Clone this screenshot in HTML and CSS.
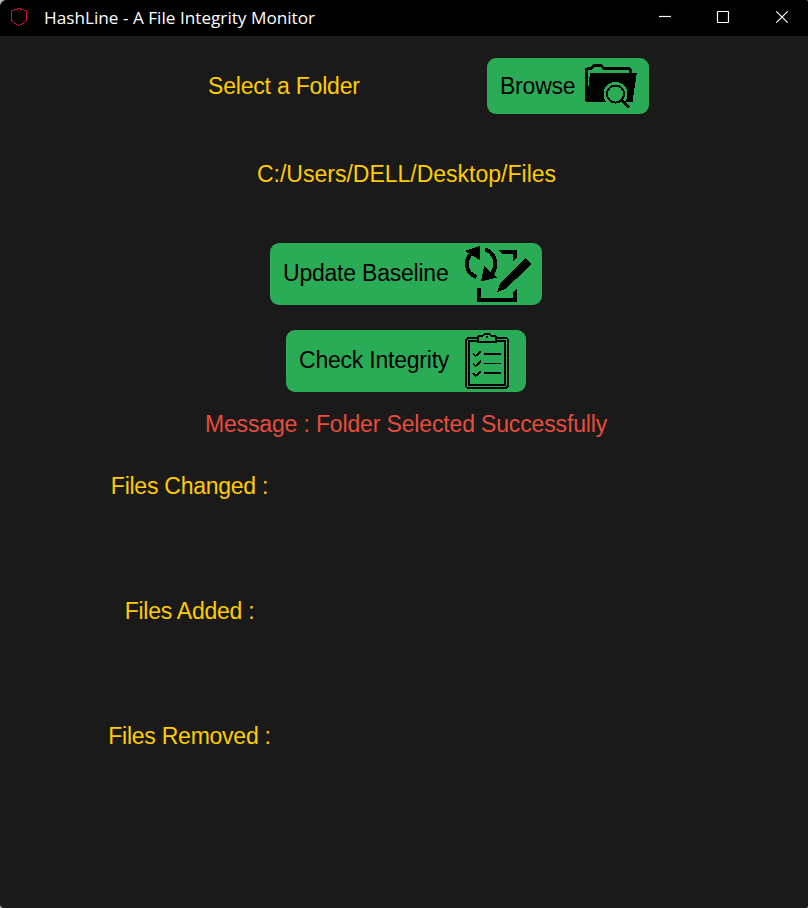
FILE: index.html
```html
<!DOCTYPE html>
<html lang="en">
<head>
<meta charset="utf-8">
<title>HashLine - A File Integrity Monitor</title>
<link rel="stylesheet" href="styles.css">
</head>
<body>
<div class="window">
  <header class="titlebar">
    <svg class="shield" viewBox="0 0 18 20" width="18" height="20"><path d="M9 1.500 6 2.500 1.500 3.500V13L4 16 9 18.500 14 16 16.500 13V3.500L12 2.500Z"/></svg>
    <h1 class="title">HashLine - A File Integrity Monitor</h1>
    <div class="controls">
      <svg viewBox="0 0 58 36" width="58" height="36"><path d="M23 16.500H35"/></svg>
      <svg viewBox="0 0 58 36" width="58" height="36"><rect x="23.500" y="11.500" width="11" height="11" rx=".7"/></svg>
      <svg viewBox="0 0 58 36" width="58" height="36"><path d="M24.300 11.300 35.700 22.700M35.700 11.300 24.300 22.700"/></svg>
    </div>
  </header>
  <main class="content">
    <div class="picker">
      <span class="label prompt">Select a Folder</span>
      <button class="button browse">
        <span>Browse</span>
        <svg class="icon" viewBox="585 62 55 48" width="55" height="48">
          <path class="folder" d="M587.300 101V69.500L589 68.300H592.500L595 65.300H601.500L604.500 68.300H630L631.700 70V74"/>
          <path d="M591 73H637.500V75L633.500 102H587.500L586 100.500V95H588.500Z"/>
          <circle class="halo" cx="616.500" cy="94" r="12"/>
          <path class="handle" d="M622.500 100 630 107.500"/>
          <circle class="lens" cx="616.500" cy="94" r="8.500"/>
        </svg>
      </button>
    </div>
    <p class="label path">C:/Users/DELL/Desktop/Files</p>
    <div class="actions">
      <button class="button update">
        <span>Update Baseline</span>
        <svg class="icon" viewBox="463 243 70 62" width="70" height="62">
          <path d="M499 250H517V257L513 261V254H502Z"/>
          <path d="M477 288H481V298H513V292L517 288V302H477Z"/>
          <path d="M497.300 292 500 283.700 525 258 531.500 264 505.700 289Z"/>
          <path d="M464.700 251 480 246V260Z"/>
          <path class="arc" d="M472 253C464 260 465 273 476.500 277"/>
          <path d="M484 266 497 277.500 481 281.500Z"/>
          <path class="arc" d="M485 249.500C496 253 498 265 491.500 275"/>
        </svg>
      </button>
      <button class="button check">
        <span>Check Integrity</span>
        <svg class="icon" viewBox="463 330 48 62" width="48" height="62">
          <rect class="line2" x="466" y="338" width="42" height="50" rx="3"/>
          <rect class="line2" x="469" y="341" width="36" height="44"/>
          <path class="clip" d="M478 342V337L479.500 335.500H483L485 333.500H489L491 335.500H494.500L496 337V342Z"/>
          <rect x="486" y="336" width="2" height="2"/>
          <path class="line2" d="M484.300 354H501M484.300 373H501"/>
          <path class="line1" d="M484.300 363.500H501"/>
          <path class="tick" d="M473 353.500 475.500 356 481 351.500M473 363.500 475.500 366 481 361M473 373 475.500 376 481 371.500"/>
        </svg>
      </button>
    </div>
    <p class="label message">Message : Folder Selected Successfully</p>
    <section class="results">
      <h2 class="label">Files Changed :</h2>
      <h2 class="label">Files Added :</h2>
      <h2 class="label">Files Removed :</h2>
    </section>
  </main>
</div>
</body>
</html>
```
FILE: styles.css
```css
* { box-sizing: border-box; }
body { margin: 0; background: #b5b7b6; }
.window {
  width: 808px;
  height: 908px;
  background: #1a1a1a;
  border-radius: 7px 2px 2px 4px;
  overflow: hidden;
  font: 23px/26px "Liberation Sans", Arial, sans-serif;
}
.titlebar { display: flex; align-items: center; height: 36px; padding-left: 10px; background: #000; }
.shield { fill: none; stroke: #c8102e; stroke-width: 1; shape-rendering: crispEdges; margin-top: -2px; }
.title { margin: -1px 0 0 16px; font: 400 17.2px/35px "Open Sans", "Noto Sans", sans-serif; color: #fff; white-space: nowrap; }
.controls { display: flex; margin-left: auto; margin-right: -2px; }
.controls svg { fill: none; stroke: #fff; stroke-width: 1.2; }
.content { display: flex; flex-direction: column; }
.label { margin: 0; font-size: 23px; font-weight: 400; line-height: 26px; letter-spacing: -0.2px; color: #ffcc00; white-space: nowrap; }
.picker { display: flex; align-items: center; height: 56px; margin-top: 22px; padding-left: 208px; }
.prompt { width: 279px; }
.button {
  display: flex;
  align-items: center;
  justify-content: space-between;
  height: 62px;
  padding: 0 10px 0 13px;
  border: 0;
  border-radius: 9px;
  background: #2aac57;
  color: #000;
  font: inherit;
  letter-spacing: -0.22px;
  white-space: nowrap;
}
.button span { margin-top: -2px; }
.icon { flex: none; shape-rendering: crispEdges; }
.browse { width: 162px; height: 56px; padding-right: 10px; }
.browse span { margin-top: 0; }
.path { margin-top: 47px; text-align: center; padding-left: 5px; letter-spacing: 0; }
.actions { display: flex; flex-direction: column; align-items: center; gap: 25px; margin-top: 56px; padding-left: 4px; }
.update { width: 272px; padding-right: 9px; }
.check { width: 240px; padding-right: 15px; }
.message { margin-top: 19px; padding-left: 4px; text-align: center; color: #e74c3c; letter-spacing: -0.15px; }
.results { display: grid; grid-auto-rows: 125px; width: 379px; margin-top: 36px; text-align: center; }
.results .label { letter-spacing: -0.25px; }
.line1, .line2, .folder, .clip, .lens, .arc, .tick, .handle { fill: none; stroke: #000; }
.line2, .lens { stroke-width: 2; }
.line1 { stroke-width: 1.2; }
.folder { stroke-width: 2.6; }
.halo { fill: #2aac57; }
.arc { stroke-width: 4; }
.handle { stroke-width: 3.5; }
.tick { stroke-width: 2; }
.clip { fill: #2aac57; stroke-width: 2; }
```
